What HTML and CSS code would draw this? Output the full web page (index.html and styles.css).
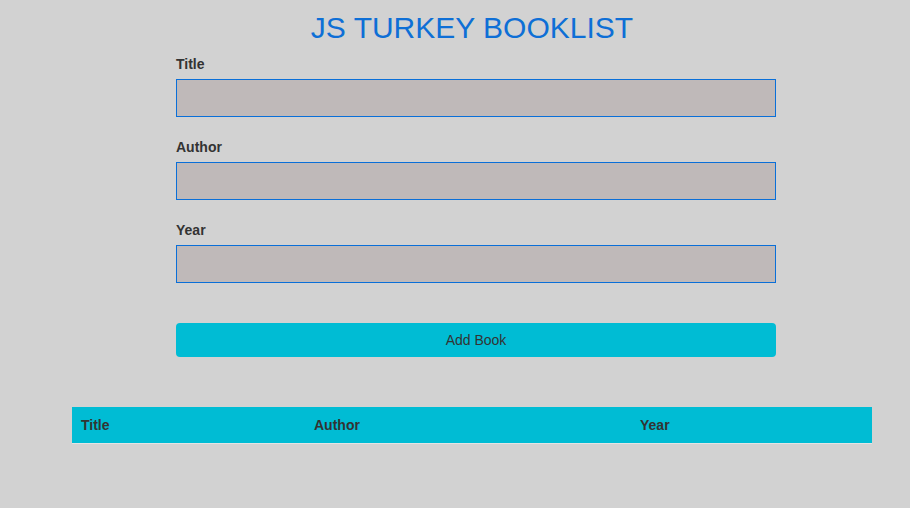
FILE: index.html
```html
<!DOCTYPE html>
<html>
<head>
<meta charset="utf-8">
<link rel="stylesheet" href="styles.css">
</head>
<body>
<div class="container">
  <h1 class="title">JS TURKEY BOOKLIST</h1>
  <form class="book-form">
    <div class="field">
      <label class="label" for="title">Title</label>
      <input class="input" id="title" type="text">
    </div>
    <div class="field">
      <label class="label" for="author">Author</label>
      <input class="input" id="author" type="text">
    </div>
    <div class="field">
      <label class="label" for="year">Year</label>
      <input class="input" id="year" type="text">
    </div>
    <button class="btn" type="button">Add Book</button>
  </form>
  <div class="table">
    <div class="thead">
      <div class="th">Title</div>
      <div class="th">Author</div>
      <div class="th">Year</div>
    </div>
  </div>
</div>
</body>
</html>
```

FILE: styles.css
```css
html, body {
  margin: 0;
  padding: 0;
  background: #d2d2d2;
  font-family: "Liberation Sans", Arial, sans-serif;
  color: #333;
}

.container {
  width: 800px;
  margin-left: 72px;
  padding-top: 11px;
}

.title {
  margin: 0;
  text-align: center;
  font-size: 30px;
  font-weight: normal;
  line-height: 34px;
  color: #0e6fd6;
}

.book-form {
  width: 600px;
  margin: 11px 0 0 104px;
  display: flex;
  flex-direction: column;
}

.field {
  display: flex;
  flex-direction: column;
  margin-bottom: 22px;
}

.field:last-of-type {
  margin-bottom: 40px;
}

.label {
  font-size: 14px;
  font-weight: bold;
  line-height: 16px;
  margin-bottom: 7px;
  color: #333;
}

.input {
  box-sizing: border-box;
  height: 38px;
  width: 100%;
  margin: 0;
  border: 1px solid #0a6fd8;
  background: #bfb9b9;
  outline: none;
}

.btn {
  height: 34px;
  width: 100%;
  border: none;
  border-radius: 4px;
  background: #00bcd4;
  color: #333;
  font-family: "Liberation Sans", Arial, sans-serif;
  font-size: 14px;
  padding: 0;
}

.table {
  margin-top: 50px;
  width: 800px;
}

.thead {
  display: grid;
  grid-template-columns: 233px 326px 1fr;
  height: 36px;
  align-items: center;
  background: #00bcd4;
  border-bottom: 1px solid #e4e4e4;
}

.th {
  padding-left: 9px;
  font-size: 14px;
  font-weight: bold;
  color: #333;
}
```
